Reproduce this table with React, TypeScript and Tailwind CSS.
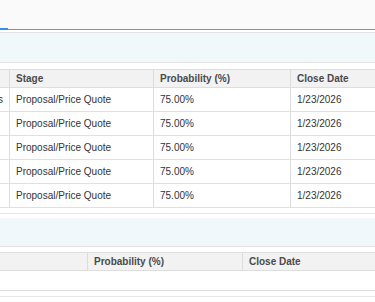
const rows = [
  { name: "Channel Partners", stage: "Proposal/Price Quote", prob: "75.00%", date: "1/23/2026" },
  { name: "", stage: "Proposal/Price Quote", prob: "75.00%", date: "1/23/2026" },
  { name: "", stage: "Proposal/Price Quote", prob: "75.00%", date: "1/23/2026" },
  { name: "", stage: "Proposal/Price Quote", prob: "75.00%", date: "1/23/2026" },
  { name: "", stage: "Proposal/Price Quote", prob: "75.00%", date: "1/23/2026" },
];

export default function App() {
  return (
    <div
      className="h-[302px] w-[375px] overflow-hidden bg-white text-[10px] text-[#333]"
      style={{ fontFamily: '"Liberation Sans", Arial, sans-serif' }}
    >
      {/* Tab bar */}
      <div className="relative h-[30px] border-b border-[#8f8f8f] bg-[#fafafa]">
        <div className="absolute -bottom-px left-0 h-[2px] w-[8px] bg-[#3d8be8]" />
      </div>

      {/* Section band */}
      <div className="mt-[2px] h-[31px] border-y border-[#e3e3e3] bg-[#f0f8fc]" />

      {/* Table 1 */}
      <div className="mt-[6px]">
        <div className="flex h-[19px] border-y border-[#dedede] bg-[#f2f2f2] font-bold text-[#4a4a4a]">
          <div className="w-[10px] shrink-0 border-r border-[#dcdcdc]" />
          <div className="flex w-[144px] shrink-0 items-center border-r border-[#dcdcdc] pl-[6px]">Stage</div>
          <div className="flex w-[137px] shrink-0 items-center border-r border-[#dcdcdc] pl-[6px]">Probability (%)</div>
          <div className="flex flex-1 items-center pl-[6px]">Close Date</div>
        </div>
        {rows.map((r, i) => (
          <div key={i} className="flex h-[24px] border-b border-[#e0e0e0]">
            <div className="flex w-[10px] shrink-0 items-center justify-end overflow-hidden border-r border-[#dcdcdc] pr-[6px]">
              <span className="whitespace-nowrap">{r.name}</span>
            </div>
            <div className="flex w-[144px] shrink-0 items-center border-r border-[#dcdcdc] pl-[6px]">{r.stage}</div>
            <div className="flex w-[137px] shrink-0 items-center border-r border-[#dcdcdc] pl-[6px]">{r.prob}</div>
            <div className="flex flex-1 items-center pl-[6px]">{r.date}</div>
          </div>
        ))}
      </div>

      {/* Second section */}
      <div className="mt-[5px] border-t border-[#e6e6e6]" />
      <div className="mt-[4px] h-[29px] border-b border-[#e3e3e3] bg-[#f0f8fc]" />

      {/* Table 2 */}
      <div className="mt-[5px]">
        <div className="flex h-[19px] border-y border-[#dedede] bg-[#f2f2f2] font-bold text-[#4a4a4a]">
          <div className="w-[88px] shrink-0 border-r border-[#dcdcdc]" />
          <div className="flex w-[155px] shrink-0 items-center border-r border-[#dcdcdc] pl-[6px]">Probability (%)</div>
          <div className="flex flex-1 items-center pl-[6px]">Close Date</div>
        </div>
        <div className="h-[20px] border-b border-[#e0e0e0]" />
        <div className="mt-[5px] border-t border-[#e6e6e6]" />
      </div>
    </div>
  );
}
